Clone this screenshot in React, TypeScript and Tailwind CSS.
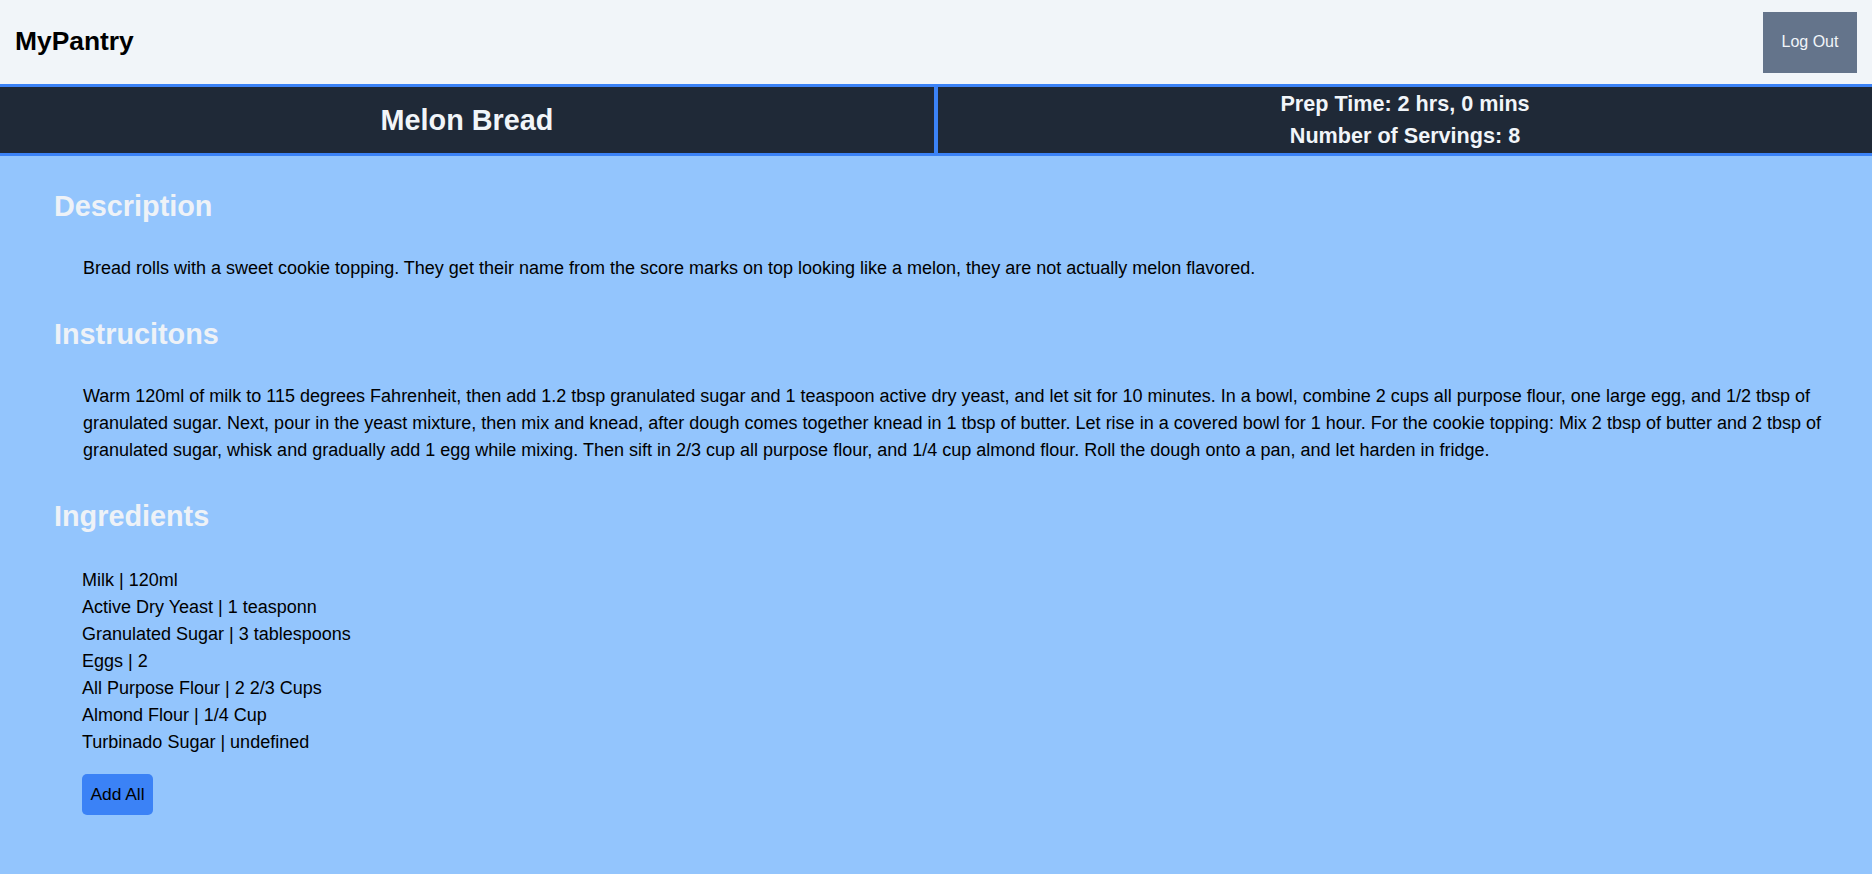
const ingredients = [
	{ name: "Milk", amount: "120ml" },
	{ name: "Active Dry Yeast", amount: "1 teasponn" },
	{ name: "Granulated Sugar", amount: "3 tablespoons" },
	{ name: "Eggs", amount: "2" },
	{ name: "All Purpose Flour", amount: "2 2/3 Cups" },
	{ name: "Almond Flour", amount: "1/4 Cup" },
	{ name: "Turbinado Sugar", amount: "undefined" },
];

function Navbar() {
	return (
		<nav className="flex h-[84px] items-center justify-between bg-[#f1f5f9] px-[15px]">
			<h1 className="text-[26.4px] font-bold text-black">MyPantry</h1>
			<button className="h-[61px] w-[94px] bg-[#64748b] text-[16px] text-[#f1f5f9]">
				Log Out
			</button>
		</nav>
	);
}

export default function App() {
	return (
		<div className="min-h-screen bg-[#93c5fd] font-['Liberation_Sans',Arial,sans-serif]">
			<Navbar />
			{/* recipe header */}
			<div className="grid grid-cols-2 border-y-[3px] border-[#3b82f6] bg-[#1f2937] text-[#f1f5f9]">
				<div className="flex h-[66px] items-center justify-center border-r-2 border-[#3b82f6] pt-[2px]">
					<h2 className="text-[28.8px] font-bold">Melon Bread</h2>
				</div>
				<div className="flex h-[66px] flex-col items-center justify-center border-l-2 border-[#3b82f6] text-[21.6px] font-bold leading-[32px]">
					<h3>Prep Time: 2 hrs, 0 mins</h3>
					<h3>Number of Servings: 8</h3>
				</div>
			</div>
			<main className="pb-10 pl-[54px] pr-[42px] pt-[32px]">
				<h2 className="text-[28.8px] font-bold leading-[36px] text-[#eef2f7]">Description</h2>
				<p className="ml-[29px] mt-[31px] text-[18px] leading-[27px] text-black">
					Bread rolls with a sweet cookie topping. They get their name from the score marks on top looking like a melon, they are not actually melon flavored.
				</p>
				<h2 className="mt-[34px] text-[28.8px] font-bold leading-[36px] text-[#eef2f7]">Instrucitons</h2>
				<p className="ml-[29px] mt-[31px] text-[18px] leading-[27px] text-black">
					Warm 120ml of milk to 115 degrees Fahrenheit, then add 1.2 tbsp granulated sugar and 1 teaspoon active dry yeast, and let sit for 10 minutes. In a bowl, combine 2 cups all purpose flour, one large egg, and 1/2 tbsp of granulated sugar. Next, pour in the yeast mixture, then mix and knead, after dough comes together knead in 1 tbsp of butter. Let rise in a covered bowl for 1 hour. For the cookie topping: Mix 2 tbsp of butter and 2 tbsp of granulated sugar, whisk and gradually add 1 egg while mixing. Then sift in 2/3 cup all purpose flour, and 1/4 cup almond flour. Roll the dough onto a pan, and let harden in fridge.
				</p>
				<h2 className="mt-[34px] text-[28.8px] font-bold leading-[36px] text-[#eef2f7]">Ingredients</h2>
				<div className="ml-[28px] mt-[33px]">
					<ul className="text-[18px] leading-[27px] text-black">
						{ingredients.map((item) => (
							<li key={item.name}>
								{item.name} | {item.amount}
							</li>
						))}
					</ul>
					<button className="mt-[18px] h-[41px] w-[71px] rounded-[5px] bg-[#3b82f6] text-[17.4px] text-black">
						Add All
					</button>
				</div>
			</main>
		</div>
	);
}
